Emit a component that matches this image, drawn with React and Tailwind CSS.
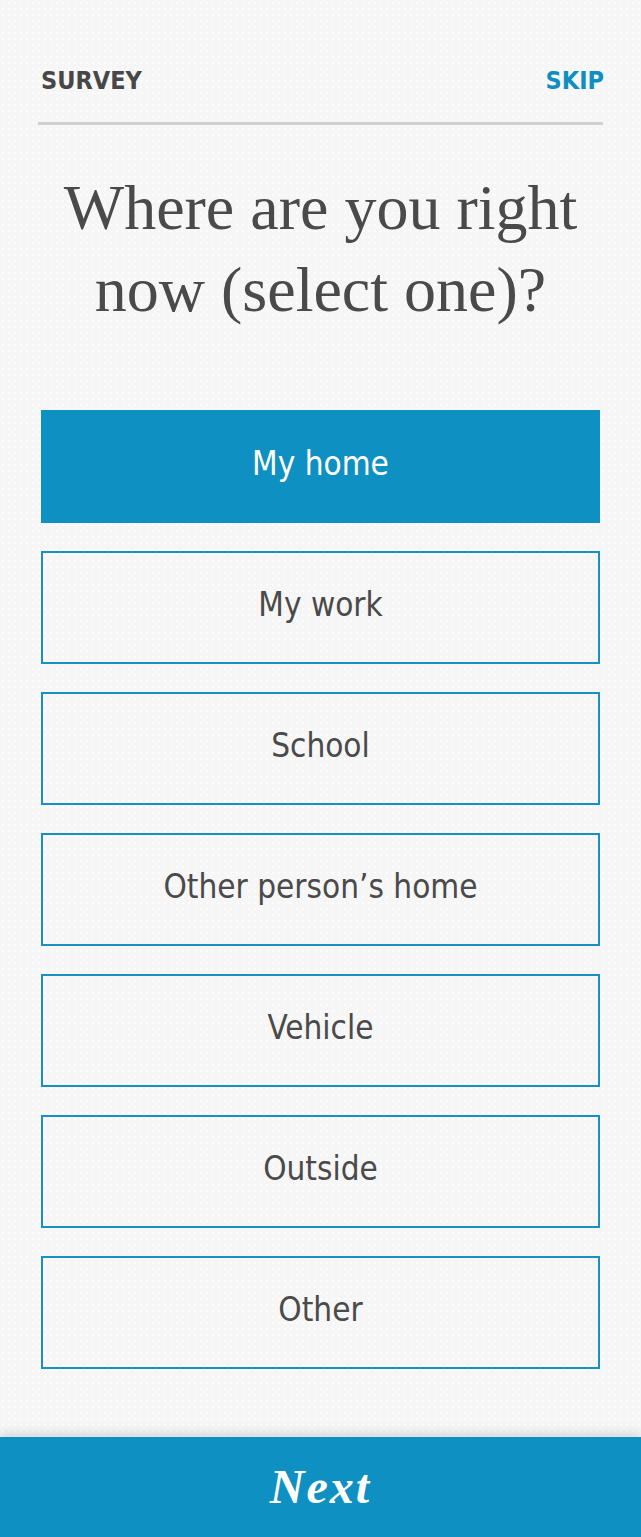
const OPTIONS = ['My home', 'My work', 'School', 'Other person’s home', 'Vehicle', 'Outside', 'Other'];

const sans = 'font-["DejaVu_Sans_Condensed","DejaVu_Sans",sans-serif]';

export default function App() {
  const selected = 'My home';

  return (
    <div className="h-[1537px] w-full flex flex-col overflow-hidden bg-[#f6f6f6] bg-[image:radial-gradient(#fcfcfc_1.2px,transparent_1.6px)] bg-[size:6px_6px]">
      <div className="px-[38px]">
        {/* Header */}
        <div className={`flex items-center justify-between pt-[66px] pb-[26px] px-[3px] border-b-[3px] border-[#d0d0d0] ${sans}`}>
          <span className="text-[25px] leading-[30px] font-bold text-[#474747]">SURVEY</span>
          <span className="text-[25px] leading-[30px] font-bold text-[#0f8fc1] -mr-[4px]">SKIP</span>
        </div>

        {/* Question */}
        <h1 className="mt-[42px] mx-auto max-w-[540px] text-center text-[64px] leading-[82px] text-[#4a4a4a] font-['Liberation_Serif',serif]">
          Where are you right now (select one)?
        </h1>

        {/* Options */}
        <div className="mt-[79px] flex flex-col gap-[28px] px-[3px]">
          {OPTIONS.map(opt => (
            <button
              key={opt}
              className={`h-[113px] w-full flex items-center justify-center pb-[5px] text-[33px] ${sans} ${
                opt === selected
                  ? 'bg-[#0f90c2] text-white'
                  : 'border-2 border-[#1a90c0] text-[#4a4a4a]'
              }`}
            >
              {opt}
            </button>
          ))}
        </div>
      </div>

      {/* Footer */}
      <div className="mt-auto h-[100px] shrink-0 bg-[#0f90c2] flex items-center justify-center shadow-[0_-4px_10px_rgba(0,0,0,0.12)]">
        <span className="text-white text-[48px] font-bold italic tracking-[2px] font-['Liberation_Serif',serif]">Next</span>
      </div>
    </div>
  );
}
